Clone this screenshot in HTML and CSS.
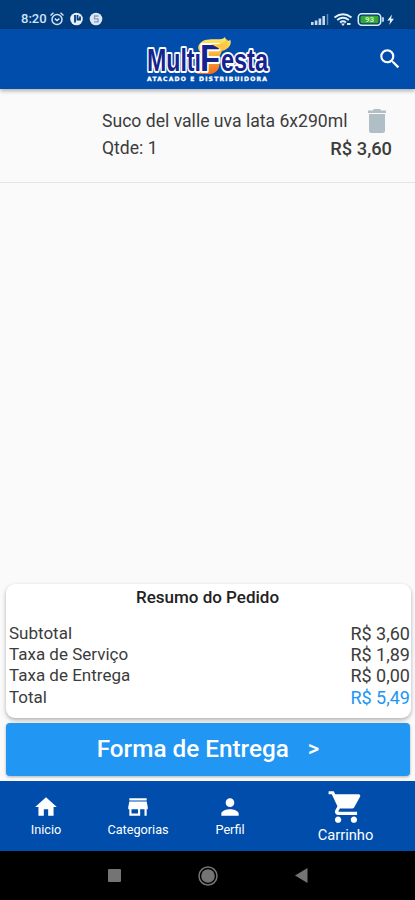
FILE: index.html
```
<!DOCTYPE html>
<html lang="pt-BR">
<head>
    <meta charset="UTF-8">
    <meta name="viewport" content="width=device-width, initial-scale=1.0">
    <title>MultiFesta - Carrinho</title>
    <link rel="stylesheet" href="styles.css">
</head>
<body>
    <div class="status-bar">
        <span class="clock">8:20</span>
        <svg class="status-left" width="56" height="16" viewBox="0 0 56 16">
            <!-- alarm -->
            <g fill="none" stroke="#d3e2f5" stroke-width="1.5">
                <circle cx="8" cy="8.5" r="5"/>
                <path d="M1.5 4.5l3-2.7M14.5 4.5l-3-2.7M5.8 7.6l2.2 2 2.4-2"/>
            </g>
            <circle cx="27.5" cy="8" r="6.3" fill="#e6effa"/>
            <path d="M26 4v7.5M28.5 4v4.5H31v-3" fill="none" stroke="#003b7c" stroke-width="1.8"/>
            <circle cx="47" cy="8" r="6.3" fill="#dce8f6"/>
            <path d="M49.5 5h-4v2.8H49v3h-4" fill="none" stroke="#8099ba" stroke-width="1.3"/>
        </svg>
        <svg class="status-right" width="84" height="16" viewBox="0 0 84 16">
            <!-- signal -->
            <path d="M0 14v-3h2.600v3zM3.800 14v-4.500h2.600v4.500zM7.600 14v-6.500h2.600v6.500zM11.400 14V5H14v9z" fill="#c5daf2"/>
            <path d="M16.500 14V3" stroke="#5f87b7" stroke-width="1.5"/>
            <!-- wifi -->
            <path d="M23.500 6.500q8.500-6.500 17 0M26.200 9q5.800-4.500 11.600 0M29 11.500q3-2.300 6 0" fill="none" stroke="#e4effb" stroke-width="1.9"/>
            <path d="M30 12.500h4l-2 2.500zM36 12h3.500v2H36z" fill="#e4effb"/>
            <!-- battery -->
            <rect x="47.3" y="2.8" width="22.4" height="11.4" rx="3.5" fill="#003b7c" stroke="#dcebf8" stroke-width="1.6"/>
            <rect x="49.5" y="4.8" width="18" height="7.4" rx="1.5" fill="#35a832"/>
            <path d="M71.200 6.300h1.600v4.500h-1.600z" fill="#dcebf8"/>
            <text class="battery-level" x="58.5" y="11.3">93</text>
            <path d="M81 3.500l-4.700 6h2.900l-1 4.500 4.700-6.300h-2.800z" fill="#e8f2fc"/>
        </svg>
    </div>

    <header class="app-bar">
        <svg class="logo" width="140" height="58" viewBox="0 0 140 58">
            <defs>
                <linearGradient id="flame" x1="0" y1="0" x2="0" y2="1">
                    <stop offset="0" stop-color="#fff06a"/>
                    <stop offset="0.45" stop-color="#fdb43c"/>
                    <stop offset="1" stop-color="#f26a21"/>
                </linearGradient>
            </defs>
            <path d="M54 44C50 35 54 30 59 23C53 20 54 13 62 10C70 8 79 11 82 7C83 12 88 11 87 9C90 15 84 20 79 21L75 30C79 36 74 43 68 44Z" fill="url(#flame)"/>
            <text class="logo-text" x="4" y="41" textLength="54" lengthAdjust="spacingAndGlyphs">Multı</text>
            <text class="logo-text" x="78" y="41" textLength="47" lengthAdjust="spacingAndGlyphs">esta</text>
            <text class="logo-text logo-f" x="57" y="41" textLength="20" lengthAdjust="spacingAndGlyphs">F</text>
            <path d="M68 14C75 15 81 14 84 9C86 15 82 19 77 19" fill="#fdc844"/>
            <text class="logo-sub" x="4" y="51" textLength="120" lengthAdjust="spacing">ATACADO E DISTRIBUIDORA</text>
        </svg>
        <svg class="search" width="26" height="26" viewBox="0 0 24 24">
            <path d="M15.500 14h-.79l-.28-.27A6.471 6.471 0 0 0 16 9.500 6.500 6.500 0 1 0 9.500 16c1.610 0 3.090-.59 4.230-1.570l.27.280v.79l5 4.990L20.490 19l-4.990-5zm-6 0C7.010 14 5 11.990 5 9.500S7.010 5 9.500 5 14 7.010 14 9.500 11.990 14 9.500 14z"/>
        </svg>
    </header>

    <main class="cart">
        <div class="cart-item">
            <div class="item-row">
                <span class="item-name">Suco del valle uva lata 6x290ml</span>
                <svg class="trash" width="18" height="24" viewBox="0 0 18 24">
                    <path d="M0 1.500h5L6 0h6l1 1.500h5V4H0zM1 5h16v16.500q0 2.500-2.500 2.500h-11Q1 24 1 21.500z"/>
                </svg>
            </div>
            <div class="item-row">
                <span>Qtde: 1</span>
                <span class="item-price">R$ 3,60</span>
            </div>
        </div>
    </main>

    <section class="summary">
        <h2>Resumo do Pedido</h2>
        <div class="line"><span>Subtotal</span><span class="value">R$ 3,60</span></div>
        <div class="line"><span>Taxa de Serviço</span><span class="value">R$ 1,89</span></div>
        <div class="line"><span>Taxa de Entrega</span><span class="value">R$ 0,00</span></div>
        <div class="line"><span>Total</span><span class="value total">R$ 5,49</span></div>
    </section>

    <button class="delivery"><span>Forma de Entrega</span><span class="arrow">&gt;</span></button>

    <nav class="tabs">
        <a class="tab">
            <svg width="26" height="26" viewBox="0 0 24 24"><path d="M10 20v-6h4v6h5v-8h3L12 3 2 12h3v8z"/></svg>
            <span>Inicio</span>
        </a>
        <a class="tab">
            <svg width="26" height="26" viewBox="0 0 24 24"><path d="M20 4H4v2h16V4zm1 10v-2l-1-5H4l-1 5v2h1v6h10v-6h4v6h2v-6h1zm-9 4H6v-4h6v4z"/></svg>
            <span>Categorias</span>
        </a>
        <a class="tab">
            <svg width="26" height="26" viewBox="0 0 24 24"><path d="M12 12c2.210 0 4-1.790 4-4s-1.790-4-4-4-4 1.790-4 4 1.790 4 4 4zm0 2c-2.670 0-8 1.340-8 4v2h16v-2c0-2.660-5.330-4-8-4z"/></svg>
            <span>Perfil</span>
        </a>
        <a class="tab active">
            <svg width="38" height="38" viewBox="0 0 24 24"><path d="M7 18c-1.100 0-1.990.9-1.990 2S5.900 22 7 22s2-.9 2-2-.9-2-2-2zM1 2v2h2l3.600 7.590-1.350 2.450c-.16.280-.25.610-.25.960 0 1.100.9 2 2 2h12v-2H7.420c-.14 0-.25-.11-.25-.25l.03-.12.9-1.630h7.450c.75 0 1.410-.41 1.750-1.030l3.580-6.490A1 1 0 0 0 20 4H5.210l-.94-2H1zm16 16c-1.100 0-1.990.9-1.990 2s.89 2 1.990 2 2-.9 2-2-.9-2-2-2z"/></svg>
            <span>Carrinho</span>
        </a>
    </nav>

    <div class="system-bar">
        <svg width="13" height="13" viewBox="0 0 13 13"><rect width="13" height="13" rx="1" fill="#747474"/></svg>
        <svg width="20" height="20" viewBox="0 0 20 20">
            <circle cx="10" cy="10" r="9" fill="none" stroke="#747474" stroke-width="1.5"/>
            <circle cx="10" cy="10" r="6.8" fill="#747474"/>
        </svg>
        <svg width="13" height="15" viewBox="0 0 13 15"><path d="M0 7.500L12.500 0v15z" fill="#747474"/></svg>
    </div>
</body>
</html>
```
FILE: styles.css
```
* {
    box-sizing: border-box;
}

body {
    margin: 0;
    height: 100vh;
    display: flex;
    flex-direction: column;
    overflow: hidden;
    background-color: #fafafa;
    font-family: Roboto, sans-serif;
    color: #3c3c3c;
}

svg {
    display: block;
    flex-shrink: 0;
}

.status-bar {
    height: 29px;
    display: flex;
    align-items: center;
    padding: 8px 20px 0 21px;
    background-color: #003b7c;
}

.clock {
    width: 28px;
    font-size: 13px;
    font-weight: 500;
    line-height: 16px;
    color: #d3e2f5;
}

.status-right {
    margin-left: auto;
}

.battery-level {
    font-size: 8px;
    font-weight: bold;
    text-anchor: middle;
    fill: #c9f0c4;
}

.app-bar {
    height: 60px;
    display: flex;
    align-items: center;
    padding: 0 12px 0 143px;
    background-color: #004dab;
    box-shadow: 0 2px 4px rgba(0, 0, 0, 0.3);
}

.logo {
    overflow: visible;
}

.logo-text {
    font-family: "Liberation Sans", sans-serif;
    font-size: 32px;
    font-weight: bold;
    fill: #14238e;
    stroke: #fff;
    stroke-width: 4px;
    stroke-linejoin: round;
    paint-order: stroke;
}

.logo-f {
    font-size: 37px;
}

.logo-sub {
    font-family: "DejaVu Sans", sans-serif;
    font-size: 6px;
    font-weight: bold;
    fill: #fff;
    stroke: #fff;
    stroke-width: 0.3px;
}

.search {
    margin-left: auto;
    fill: #fff;
}

.cart {
    flex: 1;
}

.cart-item {
    height: 94px;
    padding: 19px 23px 0 102px;
    border-bottom: 1px solid #e4e4e4;
    font-size: 17.6px;
    line-height: 27px;
}

.item-row {
    display: flex;
    align-items: center;
    justify-content: space-between;
    white-space: nowrap;
}

.trash {
    margin: -2px 6px 0 0;
    fill: #b0bec5;
}

.item-price {
    font-size: 18.3px;
    font-weight: 500;
    line-height: 25px;
}

.summary {
    height: 134px;
    margin: 0 4px 5px 6px;
    padding: 3px 1px 0 3px;
    border-radius: 9px;
    background-color: #fff;
    box-shadow: 0 2px 4px rgba(0, 0, 0, 0.3);
    font-size: 17px;
    line-height: 21.2px;
}

.summary h2 {
    margin: 0 4px 15px 0;
    font-size: 17px;
    font-weight: 500;
    line-height: 21px;
    text-align: center;
    color: #222;
}

.line {
    display: flex;
    justify-content: space-between;
}

.value {
    font-size: 18px;
}

.total {
    color: #2196f3;
}

.delivery {
    height: 53px;
    margin: 0 5px 5px 6px;
    padding-bottom: 3px;
    display: flex;
    align-items: center;
    justify-content: center;
    gap: 19px;
    border: none;
    border-radius: 4px;
    background-color: #2196f3;
    box-shadow: 0 1px 3px rgba(0, 0, 0, 0.3);
    color: #fff;
    font-family: inherit;
    font-size: 24.3px;
    font-weight: 500;
}

.arrow {
    font-size: 22px;
}

.tabs {
    height: 70px;
    display: grid;
    grid-template-columns: 92px 92px 92px 139px;
    background-color: #004dab;
}

.tab {
    display: flex;
    flex-direction: column;
    align-items: center;
    padding-top: 13px;
    font-size: 12.7px;
    line-height: 19px;
    color: #fff;
    fill: #fff;
}

.tab.active {
    padding-top: 7px;
    font-size: 14.7px;
}

.system-bar {
    height: 49px;
    display: flex;
    align-items: center;
    justify-content: center;
    gap: 77px;
    background-color: #000;
}
```
